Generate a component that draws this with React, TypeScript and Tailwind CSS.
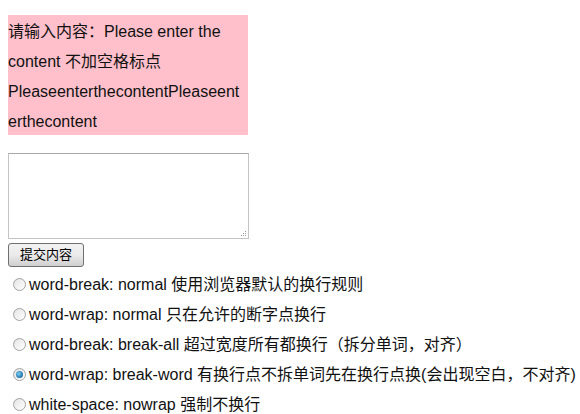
import React from "react";

const font = { fontFamily: '"Liberation Sans", Arial, "Noto Sans CJK SC", sans-serif' };

function Radio({ checked }: { checked?: boolean }) {
  return (
    <span className="ml-[5px] mr-[3px] inline-flex h-[13px] w-[13px] shrink-0 items-center justify-center rounded-full border border-[#a4a4a4] bg-gradient-to-br from-[#e0e0e0] to-[#ffffff]">
      {checked ? (
        <span className="h-[7px] w-[7px] rounded-full bg-[radial-gradient(circle_at_40%_40%,#7fd0f5,#1c6fa6_70%,#0d3b5e)]" />
      ) : (
        <span className="h-[9px] w-[9px] rounded-full bg-gradient-to-br from-[#e8e8e8] to-[#fcfcfc]" />
      )}
    </span>
  );
}

const options = [
  { t: "word-break: normal 使用浏览器默认的换行规则" },
  { t: "word-wrap: normal 只在允许的断字点换行" },
  { t: "word-break: break-all 超过宽度所有都换行（拆分单词，对齐）" },
  { t: "word-wrap: break-word 有换行点不拆单词先在换行点换(会出现空白，不对齐)", c: true },
  { t: "white-space: nowrap 强制不换行" },
];

export default function App() {
  return (
    <div className="min-h-[414px] w-[580px] overflow-hidden bg-white px-[8px] pt-[15px] text-[16px] text-[#111]" style={font}>
      <div className="h-[120px] w-[240px] overflow-hidden bg-[#ffc0cb] pt-[2px] leading-[30px]">
        <div>请输入内容：Please enter the</div>
        <div>content 不加空格标点</div>
        <div>PleaseenterthecontentPleaseent</div>
        <div>erthecontent</div>
      </div>
      <div className="relative mt-[18px] h-[86px] w-[241px] border border-[#c4c4c4] border-t-[#a8a8a8] bg-white">
        <svg className="absolute bottom-[1px] right-[1px]" width="9" height="9" viewBox="0 0 9 9">
          <rect x="7" y="3" width="1" height="1" fill="#999" />
          <rect x="5" y="5" width="1" height="1" fill="#999" />
          <rect x="7" y="5" width="1" height="1" fill="#999" />
          <rect x="3" y="7" width="1" height="1" fill="#999" />
          <rect x="5" y="7" width="1" height="1" fill="#999" />
          <rect x="7" y="7" width="1" height="1" fill="#999" />
        </svg>
      </div>
      <button
        className="mt-[4px] flex h-[24px] w-[76px] items-center justify-center rounded-[3px] border border-[#707070] bg-gradient-to-b from-[#f2f2f2] via-[#ebebeb] to-[#cfcfcf] text-[13px] text-black"
        style={font}
      >
        提交内容
      </button>
      <div className="mt-[2px]">
        {options.map((o, i) => (
          <div key={i} className="flex h-[30px] items-center whitespace-nowrap pt-[1px]">
            <Radio checked={o.c} />
            <span>{o.t}</span>
          </div>
        ))}
      </div>
    </div>
  );
}
